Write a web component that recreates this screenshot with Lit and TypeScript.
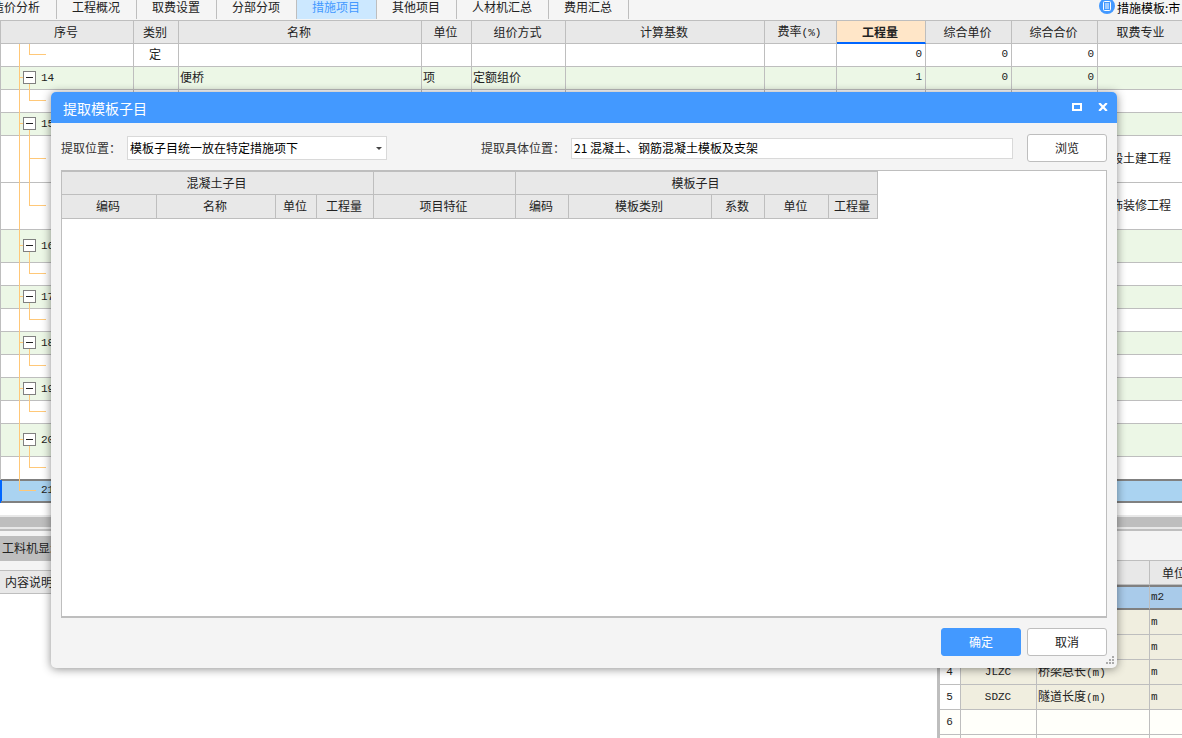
import { LitElement, html, css, nothing } from "lit";
import { customElement } from "lit/decorators.js";
import { classMap } from "lit/directives/class-map.js";

type TreeKind = "leaf" | "tee" | "node" | "last";

interface MeasureRow {
  kind: TreeKind;
  size?: "mid" | "tall";
  no?: string;
  type?: string;
  name?: string;
  unit?: string;
  pricing?: string;
  qty?: string;
  price?: string;
  total?: string;
  trade?: string;
}

const TABS = ["造价分析", "工程概况", "取费设置", "分部分项", "措施项目", "其他项目", "人材机汇总", "费用汇总"];

const COLUMNS = ["序号", "类别", "名称", "单位", "组价方式", "计算基数", "费率(%)", "工程量", "综合单价", "综合合价", "取费专业"];

const ROWS: MeasureRow[] = [
  { kind: "leaf", type: "定", qty: "0", price: "0", total: "0" },
  { kind: "node", no: "14", name: "便桥", unit: "项", pricing: "定额组价", qty: "1", price: "0", total: "0" },
  { kind: "leaf" },
  { kind: "node", no: "15" },
  { kind: "tee", size: "tall", trade: "一般土建工程" },
  { kind: "leaf", size: "tall", trade: "装饰装修工程" },
  { kind: "node", size: "mid", no: "16" },
  { kind: "leaf" },
  { kind: "node", no: "17" },
  { kind: "leaf" },
  { kind: "node", no: "18" },
  { kind: "leaf" },
  { kind: "node", no: "19" },
  { kind: "leaf" },
  { kind: "node", size: "mid", no: "20" },
  { kind: "leaf" },
  { kind: "last", no: "21" },
];

const PARAMS = [
  { no: "1", code: "", name: "", unit: "m2" },
  { no: "2", code: "", name: "", unit: "m" },
  { no: "3", code: "", name: "", unit: "m" },
  { no: "4", code: "JLZC", name: "桥梁总长(m)", unit: "m" },
  { no: "5", code: "SDZC", name: "隧道长度(m)", unit: "m" },
  { no: "6", code: "", name: "", unit: "" },
  { no: "", code: "", name: "", unit: "" },
];

@customElement("measure-grid")
class MeasureGrid extends LitElement {
  static styles = css`
    :host { display: block; overflow: hidden; background: #fff; padding-bottom: 12px; }
    table { width: 100%; min-width: 1186px; table-layout: fixed; border-collapse: separate; border-spacing: 0; border-top: 1px solid #bebebe; border-left: 1px solid #bebebe; color: #222; }
    .c0 { width: 133px; } .c1 { width: 45px; } .c3 { width: 50px; } .c4 { width: 94px; }
    .c5 { width: 199px; } .c6 { width: 72px; } .c7 { width: 89px; } .c8, .c9 { width: 86px; } .c10 { width: 88px; }
    th, td { box-sizing: border-box; height: 23px; padding: 0 3px 2px 1px; border-right: 1px solid #bebebe; border-bottom: 1px solid #bebebe; line-height: 16px; white-space: nowrap; }
    th { padding-bottom: 0; background: #e8e8e8; font-weight: 400; text-align: center; }
    th.active { background: #ffe6c8; font-weight: 700; border-bottom: 2px solid #06f; }
    .mid td { height: 33px; }
    .tall td { height: 47px; }
    .node td { background: #ecf7e6; }
    .last td { background: #aad3f1; border-bottom: 2px solid #808080; box-shadow: 0 -1px #808080, inset 0 1px #808080; }
    .last td:first-child { box-shadow: -1px 0 #06f, inset 1px 0 #06f, 0 -1px #808080, inset 0 1px #808080; }
    td:first-child { padding: 0; }
    .num { text-align: right; }
    .mid-text { text-align: center; }
    .latin { font: 11px/16px "Liberation Mono", monospace; }
    .tree { display: flex; align-items: center; height: 23px; margin-bottom: -1px; padding-left: 18px; }
    .tree .latin { margin-bottom: 2px; }
    .mid .tree { height: 33px; }
    .tall .tree { height: 47px; }
    .last .tree { height: 22px; }
    .trunk { width: 1px; align-self: stretch; background: #ffc878; }
    .stub { width: 3px; height: 1px; margin-bottom: 2px; background: #ffc878; }
    .fold { display: flex; flex-direction: column; align-items: center; align-self: stretch; width: 13px; margin-right: 5px; }
    .pad { flex: 1; margin-bottom: -2px; }
    .drop { flex: 1; width: 1px; background: #ffc878; }
    .toggle { display: grid; place-items: center; flex: none; box-sizing: border-box; width: 13px; height: 13px; padding: 0; border: 1px solid #808080; background: #fff; }
    .minus { width: 7px; height: 1px; background: #222; }
    .elbow { display: flex; flex-direction: column; align-self: stretch; width: 17px; margin-left: 9px; }
    .upper { flex: 1; border-left: 1px solid #ffc878; border-bottom: 1px solid #ffc878; }
    .lower { flex: 1; padding-top: 2px; border-left: 1px solid transparent; }
    .tee .lower { border-color: #ffc878; }
    .root { margin: 0 5px 0 0; }
  `;

  private tree(row: MeasureRow) {
    if (row.kind === "node") {
      return html`<div class="tree">
        <span class="trunk"></span><span class="stub"></span>
        <span class="fold"><span class="pad"></span><button class="toggle" aria-label="折叠"><span class="minus"></span></button><span class="drop"></span></span>
        <span class="latin">${row.no}</span>
      </div>`;
    }
    if (row.kind === "last") {
      return html`<div class="tree"><span class="elbow root"><span class="upper"></span><span class="lower"></span></span><span class="latin">${row.no}</span></div>`;
    }
    return html`<div class="tree"><span class="trunk"></span><span class="elbow"><span class="upper"></span><span class="lower"></span></span></div>`;
  }

  render() {
    return html`<table>
      <colgroup>${COLUMNS.map((_, i) => html`<col class="c${i}">`)}</colgroup>
      <thead><tr>${COLUMNS.map((c) => html`<th scope="col" class=${classMap({ active: c === "工程量" })}>${c.endsWith("(%)") ? html`费率<span class="latin">(%)</span>` : c}</th>`)}</tr></thead>
      <tbody>${ROWS.map((r) => html`<tr class="${r.kind} ${r.size ?? ""}">
        <td>${this.tree(r)}</td><td class="mid-text">${r.type}</td><td>${r.name}</td><td>${r.unit}</td><td>${r.pricing}</td><td></td><td></td>
        <td class="num latin">${r.qty}</td><td class="num latin">${r.price}</td><td class="num latin">${r.total}</td><td>${r.trade}</td>
      </tr>`)}</tbody>
    </table>`;
  }
}

@customElement("detail-panes")
class DetailPanes extends LitElement {
  static styles = css`
    :host { display: flex; flex-direction: column; flex: 1; min-height: 0; overflow: hidden; color: #222; }
    .splitter { flex: none; height: 10px; background: #bebebe; border-top: 2px solid #e8e8e8; border-bottom: 2px solid #e8e8e8; }
    .edge { flex: none; height: 2px; background: #bebebe; }
    .panes { display: flex; flex: 1; min-height: 0; background: #f4f4f4; }
    .left { display: flex; flex-direction: column; align-items: flex-start; flex: 1; padding-top: 5px; }
    .tab { box-sizing: border-box; height: 25px; margin-bottom: 9px; padding: 0 2px 1px; border: 0; background: #bebebe; color: #222; font: inherit; }
    .notes { flex: 1; align-self: stretch; background: #fff; }
    table { table-layout: fixed; border-collapse: separate; border-spacing: 0; }
    .notes table { width: 100%; border-top: 1px solid #bebebe; }
    th, td { box-sizing: border-box; border-bottom: 1px solid #bebebe; white-space: nowrap; line-height: 16px; }
    th { background: #e8e8e8; font-weight: 400; }
    .notes th { height: 23px; padding: 0 5px; text-align: left; }
    .right { flex: none; box-sizing: border-box; width: 245px; padding-top: 29px; overflow: hidden; background: linear-gradient(#f4f4f4 29px, #fff 29px); border-left: 3px solid #bebebe; }
    .right table { width: 259px; border-top: 1px solid #bebebe; }
    .n { width: 21px; } .code { width: 76px; } .name { width: 113px; } .unit { width: 49px; }
    .right th { height: 24px; border-right: 1px solid #bebebe; padding: 0; }
    .right td { height: 25px; padding: 0 2px 1px 1px; border-right: 1px solid #bebebe; background: #f0eedf; }
    .right td:first-child { background: #fff; text-align: center; }
    .right td:nth-child(2) { text-align: center; }
    .right .chosen td { background: #a9cbea; border-top: 2px solid #808080; border-bottom: 2px solid #808080; }
    .right .blank td { background: #fffffa; }
    .latin { font: 11px/16px "Liberation Mono", monospace; }
  `;

  render() {
    return html`
      <div class="splitter"></div><div class="edge"></div>
      <div class="panes">
        <section class="left">
          <button class="tab">工料机显示</button>
          <div class="notes"><table><thead><tr><th scope="col">内容说明</th></tr></thead></table></div>
        </section>
        <section class="right">
          <table>
            <colgroup><col class="n"><col class="code"><col class="name"><col class="unit"></colgroup>
            <thead><tr><th></th><th></th><th></th><th scope="col">单位</th></tr></thead>
            <tbody>${PARAMS.map((p, i) => html`<tr class=${classMap({ chosen: i === 0, blank: !p.unit })}>
              <td class="latin">${p.no}</td><td class="latin">${p.code}</td>
              <td>${p.name ? html`${p.name.slice(0, 4)}<span class="latin">${p.name.slice(4)}</span>` : nothing}</td>
              <td class="latin">${p.unit}</td></tr>`)}</tbody>
          </table>
        </section>
      </div>`;
  }
}

@customElement("extract-dialog")
class ExtractDialog extends LitElement {
  static styles = css`
    :host { display: flex; flex-direction: column; border-radius: 5px; overflow: hidden; background: #f4f4f4; box-shadow: 0 1px 10px rgba(0, 0, 0, 0.45); color: #333; }
    header { display: flex; align-items: center; gap: 10px; height: 31px; padding: 0 6px 0 12px; background: #4399ff; color: #fff; }
    h2 { flex: 1; margin: 0; font-size: 14px; font-weight: 400; line-height: 20px; }
    .win { display: grid; place-items: center; width: 16px; height: 16px; padding: 0 0 2px; border: 0; background: none; }
    svg { display: block; }
    .form { display: flex; align-items: center; padding: 11px 10px 8px; }
    .first { width: 66px; }
    .second { width: 90px; margin-left: 94px; }
    .picker { position: relative; width: 260px; }
    .picker svg { position: absolute; right: 5px; top: 11px; pointer-events: none; }
    select, input { box-sizing: border-box; width: 100%; margin: 0; border: 1px solid #d9d9d9; border-radius: 0; background: #fff; color: #000; font: inherit; padding: 0 2px; outline: none; }
    select { display: block; height: 24px; appearance: none; }
    input { flex: 1; width: 0; height: 21px; margin-right: 14px; padding-bottom: 2px; }
    .btn { box-sizing: border-box; width: 80px; height: 28px; padding: 0; border: 1px solid #bebebe; border-radius: 3px; background: #fff; color: #222; font: inherit; }
    .primary { border-color: #4399ff; background: #4399ff; color: #fff; }
    .frame { flex: 1; min-height: 0; margin: 0 10px; overflow: auto; border: 1px solid #bebebe; border-bottom-width: 2px; background: #fff; }
    table { width: 816px; table-layout: fixed; border-collapse: separate; border-spacing: 0; border-top: 1px solid #bebebe; color: #222; }
    th { box-sizing: border-box; padding: 0 2px 1px 0; border-right: 1px solid #bebebe; border-bottom: 1px solid #bebebe; background: #e8e8e8; font-weight: 400; line-height: 16px; height: 24px; }
    tr:first-child th { height: 23px; }
    .w95 { width: 95px; } .w119 { width: 119px; } .w41 { width: 41px; } .w57 { width: 57px; } .w142 { width: 142px; }
    .w53 { width: 53px; } .w143 { width: 143px; } .w64 { width: 64px; } .w49 { width: 49px; }
    footer { display: flex; justify-content: flex-end; gap: 6px; padding: 10px 10px 12px; }
    .grip { position: absolute; right: 3px; bottom: 4px; }
  `;

  render() {
    return html`
      <header>
        <h2 id="title">提取模板子目</h2>
        <button class="win" aria-label="最大化"><svg width="10" height="8"><path d="M0 0h10v8H0zM2 2v4h6V2z" fill="#fff" fill-rule="evenodd"/></svg></button>
        <button class="win" aria-label="关闭"><svg width="10" height="8"><path d="M1.200 0 8.800 8M8.800 0 1.200 8" stroke="#fff" stroke-width="2.200"/></svg></button>
      </header>
      <div class="form">
        <label class="first" for="place">提取位置：</label>
        <span class="picker">
          <select id="place"><option>模板子目统一放在特定措施项下</option></select>
          <svg width="6" height="3"><path d="M0 0h6L3 3z" fill="#444"/></svg>
        </span>
        <label class="second" for="target">提取具体位置：</label>
        <input id="target" type="text" value="21 混凝土、钢筋混凝土模板及支架">
        <button class="btn">浏览</button>
      </div>
      <div class="frame">
        <table>
          <colgroup>${[95, 119, 41, 57, 142, 53, 143, 53, 64, 49].map((w) => html`<col class="w${w}">`)}</colgroup>
          <thead>
            <tr><th colspan="4" scope="colgroup">混凝土子目</th><th></th><th colspan="5" scope="colgroup">模板子目</th></tr>
            <tr>${["编码", "名称", "单位", "工程量", "项目特征", "编码", "模板类别", "系数", "单位", "工程量"].map((t) => html`<th scope="col">${t}</th>`)}</tr>
          </thead>
        </table>
      </div>
      <footer><button class="btn primary">确定</button><button class="btn">取消</button></footer>
      <svg class="grip" width="8" height="8" fill="#aaa"><path d="M6 0h2v2H6zM3 3h2v2H3zM6 3h2v2H6zM0 6h2v2H0zM3 6h2v2H3zM6 6h2v2H6z"/></svg>`;
  }
}

@customElement("app-root")
class AppRoot extends LitElement {
  static styles = css`
    :host { position: relative; display: flex; flex-direction: column; height: 100vh; overflow: hidden; background: #fff; font: 12px/16px "Noto Sans CJK SC", sans-serif; }
    .bar { display: flex; flex: none; height: 20px; background: #f5f5f5; }
    nav { display: flex; margin-left: -23px; }
    .tab { box-sizing: border-box; height: 19px; padding: 0 16px 5px 15px; border: 0; border-right: 1px solid #bebebe; background: none; color: #222; font: inherit; line-height: 14px; white-space: nowrap; }
    .on { background: #cce8ff; color: #4399ff; }
    .template { display: flex; gap: 2px; width: 83px; height: 15px; margin-left: auto; overflow: hidden; color: #000; line-height: 15px; white-space: nowrap; text-decoration: none; }
    .template svg { flex: none; margin-top: -2px; }
    .dialog { position: absolute; top: 92px; right: 65px; bottom: 70px; left: 51px; }
    measure-grid { flex: none; }
  `;

  render() {
    return html`
      <div class="bar">
        <nav>${TABS.map((t) => html`<button class=${classMap({ tab: true, on: t === "措施项目" })}>${t}</button>`)}</nav>
        <a class="template" href="#"><svg width="16" height="16" viewBox="0 0 16 16"><circle cx="8" cy="8" r="8" fill="#4399ff"/><path d="M5.500 3.500h5a1 1 0 0 1 1 1v7a1 1 0 0 1-1 1h-5a1 1 0 0 1-1-1v-7a1 1 0 0 1 1-1zM6 6h4M6 8h4M6 10h4" fill="none" stroke="#fff"/></svg><span>措施模板:市</span></a>
      </div>
      <measure-grid></measure-grid>
      <detail-panes></detail-panes>
      <extract-dialog class="dialog" role="dialog" aria-label="提取模板子目"></extract-dialog>`;
  }
}
